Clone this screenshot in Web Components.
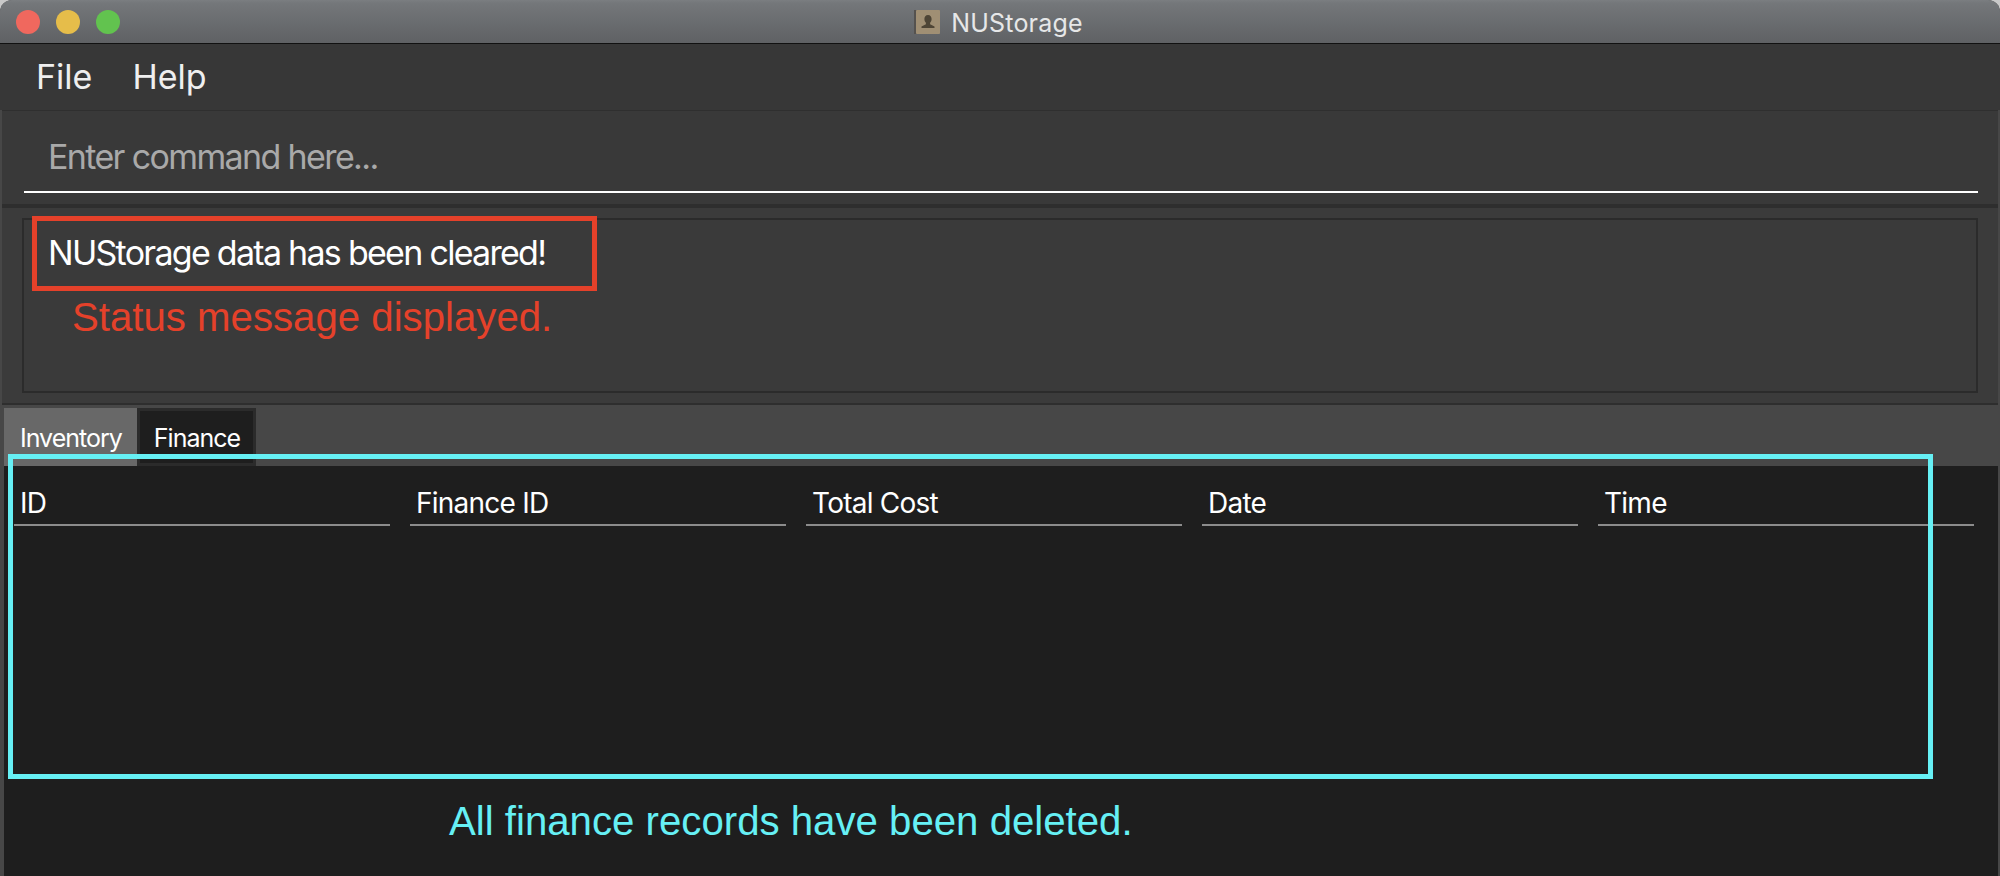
<!DOCTYPE html>
<html>
<head>
<meta charset="utf-8">
<title>NUStorage</title>
<style>
  html, body { margin: 0; height: 100%; background: #c9c9c9; overflow: hidden; }
</style>
</head>
<body>
<nu-window>
  <title-bar slot="title">NUStorage</title-bar>
  <menu-bar><span>File</span><span>Help</span></menu-bar>
  <command-box placeholder="Enter command here..."></command-box>
  <result-display>NUStorage data has been cleared!</result-display>
  <tab-pane>
    <tab-item slot="tabs">Inventory</tab-item>
    <tab-item slot="tabs" selected>Finance</tab-item>
    <finance-table columns="ID,Finance ID,Total Cost,Date,Time"></finance-table>
  </tab-pane>
  <note-box style="--c:#e5412a; left:32px; top:216px; width:565px; height:75px;">
    <span style="left:35px; top:74px;">Status message displayed.</span>
  </note-box>
  <note-box style="--c:#66f0f5; left:8px; top:454px; width:1925px; height:325px;">
    <span style="left:436px; top:340px;">All finance records have been deleted.</span>
  </note-box>
</nu-window>
<script>
const windowTemplate = document.createElement('template');
windowTemplate.innerHTML = `
  <style>
    :host {
      position: relative;
      display: flex;
      flex-direction: column;
      height: 876px;
      background: #474747;
      border-radius: 12px 12px 0 0;
      overflow: hidden;
      font-family: Inter, "Noto Sans", sans-serif;
      color: #fff;
    }
  </style>
  <slot name="title"></slot>
  <slot></slot>
`;

class NuWindow extends HTMLElement {
  constructor() {
    super();
    this.attachShadow({ mode: 'open' }).append(windowTemplate.content.cloneNode(true));
  }
}

const titleTemplate = document.createElement('template');
titleTemplate.innerHTML = `
  <style>
    :host {
      display: flex;
      align-items: center;
      justify-content: center;
      position: relative;
      flex: none;
      height: 43px;
      box-sizing: content-box;
      padding-right: 3px;
      background: linear-gradient(#7b7e81 0, #74777a 3px, #5f6164 100%);
      border-bottom: 1px solid #111;
      color: #e6e7e8;
      font-size: 25px;
      letter-spacing: 0.2px;
    }
    .label { padding-top: 2px; }
    .lights {
      position: absolute;
      left: 16px;
      top: 10px;
      display: flex;
      gap: 16px;
    }
    .lights i {
      display: block;
      width: 24px;
      height: 24px;
      border-radius: 50%;
    }
    svg { margin-right: 11px; flex: none; }
  </style>
  <div class="lights">
    <i style="background:#f0685e"></i>
    <i style="background:#e6bd4a"></i>
    <i style="background:#62c34f"></i>
  </div>
  <svg width="26" height="24" viewBox="0 0 26 24">
    <rect x="0" y="0" width="6" height="24" fill="#55524f"/>
    <rect x="2" y="0" width="24" height="24" rx="1" fill="#a08f74"/>
    <path d="M14 5c2.4 0 3.6 1.8 3.6 4 0 1.600-.7 3-1.500 3.800v1.400l4.400 2.300v1.500H7.500v-1.500l4.400-2.300v-1.400C11.100 12 10.400 10.600 10.400 9c0-2.200 1.200-4 3.600-4z" fill="#4e4536"/>
  </svg>
  <span class="label"><slot></slot></span>
`;

class TitleBar extends HTMLElement {
  constructor() {
    super();
    this.attachShadow({ mode: 'open' }).append(titleTemplate.content.cloneNode(true));
  }
}

const menuTemplate = document.createElement('template');
menuTemplate.innerHTML = `
  <style>
    :host {
      display: flex;
      flex: none;
      align-items: center;
      gap: 40px;
      box-sizing: border-box;
      height: 66px;
      padding: 0 0 2px 36px;
      background: #373737;
      color: #efefef;
      font-size: 34px;
      letter-spacing: 0;
    }
  </style>
  <slot></slot>
`;

class MenuBar extends HTMLElement {
  constructor() {
    super();
    this.attachShadow({ mode: 'open' }).append(menuTemplate.content.cloneNode(true));
  }
}

class CommandBox extends HTMLElement {
  constructor() {
    super();
    this.attachShadow({ mode: 'open' }).innerHTML = `
      <style>
        :host {
          display: block;
          flex: none;
          box-sizing: border-box;
          height: 98px;
          margin: 0 2px;
          padding: 16px 20px 0 22px;
          background: #393939;
          border-top: 1px solid #2f2f2f;
          border-bottom: 4px solid #2e2e2e;
        }
        .field {
          height: 66px;
          box-sizing: border-box;
          border-bottom: 2px solid #fff;
          padding: 8px 0 0 24px;
          color: #a9a9a9;
          font-size: 34px;
          line-height: 44px;
          letter-spacing: -1.63px;
        }
      </style>
      <div class="field">${this.getAttribute('placeholder')}</div>
    `;
  }
}

const resultTemplate = document.createElement('template');
resultTemplate.innerHTML = `
  <style>
    :host {
      display: block;
      flex: none;
      box-sizing: border-box;
      height: 197px;
      margin: 0 2px;
      padding: 10px 20px 11px 20px;
      background: #3b3b3b;
      border-bottom: 2px solid #2e2e2e;
    }
    .box {
      box-sizing: border-box;
      height: 175px;
      padding: 11px 0 0 24px;
      background: #3a3a3a;
      border: 2px solid #2b2b2b;
      font-size: 34px;
      line-height: 44px;
      letter-spacing: -1.72px;
      color: #fff;
    }
  </style>
  <div class="box"><slot></slot></div>
`;

class ResultDisplay extends HTMLElement {
  constructor() {
    super();
    this.attachShadow({ mode: 'open' }).append(resultTemplate.content.cloneNode(true));
  }
}

const tabPaneTemplate = document.createElement('template');
tabPaneTemplate.innerHTML = `
  <style>
    :host {
      display: flex;
      flex-direction: column;
      flex: 1;
      min-height: 0;
      padding: 0 2px 0 4px;
    }
    .tabs {
      display: flex;
      flex: none;
      align-items: flex-end;
      height: 61px;
    }
    .content {
      flex: 1;
      background: #1e1e1e;
    }
  </style>
  <div class="tabs"><slot name="tabs"></slot></div>
  <div class="content"><slot></slot></div>
`;

class TabPane extends HTMLElement {
  constructor() {
    super();
    this.attachShadow({ mode: 'open' }).append(tabPaneTemplate.content.cloneNode(true));
  }
}

const tabItemTemplate = document.createElement('template');
tabItemTemplate.innerHTML = `
  <style>
    :host {
      display: flex;
      box-sizing: border-box;
      height: 58px;
      padding: 12px 15px 0 16px;
      background: #686868;
      color: #fff;
      font-size: 25px;
      line-height: 36px;
      letter-spacing: -1px;
    }
    :host([selected]) {
      background: #1e1e1e;
      box-shadow: inset 0 0 0 3px #2b2b2b;
      padding: 12px 16px 0 17px;
    }
  </style>
  <slot></slot>
`;

class TabItem extends HTMLElement {
  constructor() {
    super();
    this.attachShadow({ mode: 'open' }).append(tabItemTemplate.content.cloneNode(true));
  }
}

class FinanceTable extends HTMLElement {
  constructor() {
    super();
    const heads = this.getAttribute('columns').split(',')
      .map((name) => `<div class="head">${name}</div>`).join('');
    this.attachShadow({ mode: 'open' }).innerHTML = `
      <style>
        :host {
          display: block;
          padding: 12px 24px 0 10px;
        }
        .row {
          display: grid;
          grid-template-columns: repeat(5, 1fr);
          column-gap: 20px;
        }
        .head {
          box-sizing: border-box;
          height: 48px;
          padding: 7px 0 0 6px;
          border-bottom: 2px solid #8c8c8c;
          color: #fff;
          font-size: 28px;
          line-height: 36px;
          letter-spacing: -0.75px;
        }
      </style>
      <div class="row">${heads}</div>
    `;
  }
}

const noteTemplate = document.createElement('template');
noteTemplate.innerHTML = `
  <style>
    :host {
      position: absolute;
      box-sizing: border-box;
      border: 5px solid var(--c);
      pointer-events: none;
    }
    ::slotted(span) {
      position: absolute;
      white-space: nowrap;
      color: var(--c);
      font-family: "Liberation Sans", Arial, sans-serif;
      font-size: 40.2px;
      line-height: 46px;
    }
  </style>
  <slot></slot>
`;

class NoteBox extends HTMLElement {
  constructor() {
    super();
    this.attachShadow({ mode: 'open' }).append(noteTemplate.content.cloneNode(true));
  }
}

customElements.define('nu-window', NuWindow);
customElements.define('title-bar', TitleBar);
customElements.define('menu-bar', MenuBar);
customElements.define('command-box', CommandBox);
customElements.define('result-display', ResultDisplay);
customElements.define('tab-pane', TabPane);
customElements.define('tab-item', TabItem);
customElements.define('finance-table', FinanceTable);
customElements.define('note-box', NoteBox);
</script>
</body>
</html>
